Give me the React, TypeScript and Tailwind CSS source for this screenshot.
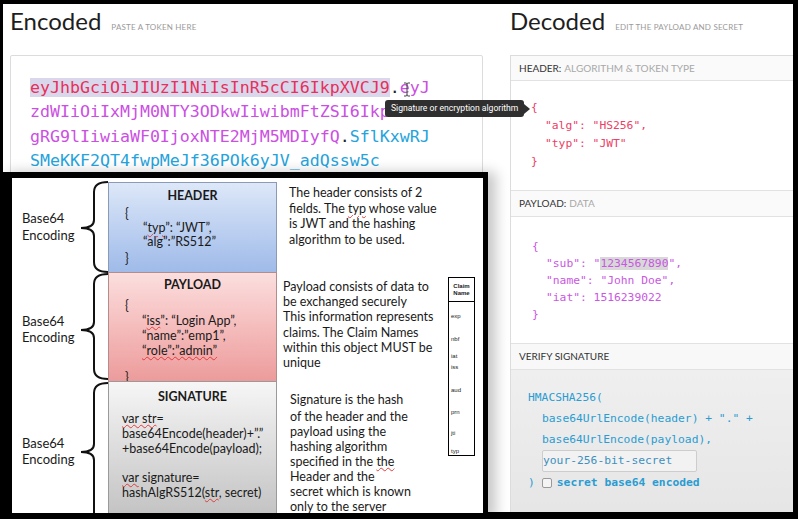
import React from "react";

const MONO = "font-['DejaVu_Sans_Mono','Liberation_Mono',monospace]";
const SANS = "font-['Lato','Liberation_Sans',sans-serif]";
const CAL = "font-['Lato','Liberation_Sans',sans-serif]";
const SPELL = "underline decoration-wavy decoration-[#e33b3b] decoration-1 underline-offset-[1px]";

function bracePath(y0: number, ym: number, y1: number) {
  return `M96 ${y0} C88 ${y0} 82 ${y0 + 3} 82 ${y0 + 10} L82 ${ym - 8} C82 ${ym - 3} 78 ${ym} 69 ${ym} C78 ${ym} 82 ${ym + 3} 82 ${ym + 8} L82 ${y1 - 10} C82 ${y1 - 3} 88 ${y1} 96 ${y1}`;
}

function Diagram() {
  return (
    <div className="absolute left-0 top-[172px] w-[488px] h-[347px] bg-black pt-[6px] pl-[12px] pr-[5px] pb-[6px] shadow-[8px_0_12px_rgba(0,0,0,0.22)]">
      <div className={`relative w-full h-full bg-white overflow-hidden ${CAL} text-[#1a1a1a]`}>
        <svg className="absolute left-0 top-0" width="471" height="335" viewBox="0 0 471 335">
          <path d={bracePath(4, 50, 94)} fill="none" stroke="#111" strokeWidth="2" />
          <path d={bracePath(96, 152, 201)} fill="none" stroke="#111" strokeWidth="2" />
          <path d={bracePath(205, 274, 345)} fill="none" stroke="#111" strokeWidth="2" />
        </svg>
        <div className="relative flex flex-col">
          {/* HEADER row */}
          <div className="flex h-[94px]">
            <div className="w-[96px] pl-[10px] pt-[32px] text-[13px] leading-[17px]">
              <div>Base64</div>
              <div>Encoding</div>
            </div>
            <div className="w-[169px] mt-[4px] border border-b-0 border-[#8c9bb5] bg-gradient-to-b from-[#dde7f8] to-[#9fbbe9] text-[12.5px]">
              <div className="mt-[5px] text-center font-bold leading-[16px]">HEADER</div>
              <div className="mt-[3px] pl-[16px] leading-[14px]">{"{"}</div>
              <div className="pl-[34px] leading-[14px]">
                “<span className={SPELL}>typ</span>”: “JWT”,
              </div>
              <div className="pl-[34px] leading-[14px]">“alg”:”RS512”</div>
              <div className="mt-[3px] pl-[16px] leading-[14px]">{"}"}</div>
            </div>
            <div className="flex-1 pl-[12px] pt-[7px] text-[12.5px] leading-[15.5px]">
              <div>The header consists of 2</div>
              <div>
                fields. The <span className={SPELL}>typ</span> whose value
              </div>
              <div>is JWT and the hashing</div>
              <div>algorithm to be used.</div>
            </div>
          </div>
          {/* PAYLOAD row */}
          <div className="flex h-[109px]">
            <div className="w-[96px] pl-[10px] pt-[41px] text-[13px] leading-[16px]">
              <div>Base64</div>
              <div>Encoding</div>
            </div>
            <div className="w-[169px] border border-b-0 border-[#b58c8c] bg-gradient-to-b from-[#fbdede] to-[#ec9b9b] text-[12.5px]">
              <div className="mt-[4px] text-center font-bold leading-[16px]">PAYLOAD</div>
              <div className="mt-[5px] pl-[16px] leading-[15px]">{"{"}</div>
              <div className="pl-[33px] leading-[15px]">
                “<span className={SPELL}>iss</span>”: “Login App”,
              </div>
              <div className="pl-[33px] leading-[15px]">“name”:”emp1”,</div>
              <div className="pl-[33px] leading-[15px]">
                <span className={SPELL}>“role”:”admin”</span>
              </div>
              <div className="mt-[13px] pl-[16px] leading-[14px]">{"}"}</div>
            </div>
            <div className="flex-1 pl-[6px] pt-[7px] text-[12.5px] leading-[15.2px]">
              <div>Payload consists of data to</div>
              <div>be exchanged securely</div>
              <div>This information represents</div>
              <div>claims. The Claim Names</div>
              <div>within this object MUST be</div>
              <div>unique</div>
            </div>
          </div>
          {/* SIGNATURE row */}
          <div className="flex h-[132px]">
            <div className="w-[96px] pl-[10px] pt-[54px] text-[13px] leading-[16px]">
              <div>Base64</div>
              <div>Encoding</div>
            </div>
            <div className="w-[169px] border border-b-0 border-[#9a9a9a] bg-gradient-to-b from-[#f6f6f6] to-[#c4c4c4] text-[12.5px]">
              <div className="mt-[7px] text-center font-bold leading-[16px]">SIGNATURE</div>
              <div className="mt-[6px] pl-[13px] leading-[15px]">
                <span className={SPELL}>var str</span>=
              </div>
              <div className="pl-[13px] leading-[15px]">base64Encode(header)+”.”</div>
              <div className="pl-[13px] leading-[15px]">+base64Encode(payload);</div>
              <div className="h-[14px]" />
              <div className="pl-[13px] leading-[15px]">
                <span className={SPELL}>var</span> signature=
              </div>
              <div className="pl-[13px] leading-[15px]">
                hashAlgRS512(<span className={SPELL}>str</span>, secret)
              </div>
            </div>
            <div className="flex-1 pl-[13px] pt-[11px] text-[12.5px] leading-[15px]">
              <div className="mb-[2px]">Signature is the hash</div>
              <div>of the header and the</div>
              <div>payload using the</div>
              <div>hashing algorithm</div>
              <div>
                specified in the <span className={SPELL}>the</span>
              </div>
              <div>Header and the</div>
              <div>secret which is known</div>
              <div>only to the server</div>
            </div>
          </div>
        </div>
        {/* Claim table */}
        <div className="absolute left-[436px] top-[99px] w-[27px] h-[179px] border-x-[1.5px] border-t-[1.5px] border-b border-black flex flex-col text-[6px] leading-[8px] font-['Liberation_Sans',sans-serif]">
          <div className="h-[24px] border-b-[1.5px] border-black flex flex-col items-center justify-center font-bold leading-[7px]">
            <div>Claim</div>
            <div>Name</div>
          </div>
          <div className="pl-[2px] mt-[10px]">exp</div>
          <div className="pl-[2px] mt-[15px]">nbf</div>
          <div className="pl-[2px] mt-[9px]">iat</div>
          <div className="pl-[2px] mt-[3px]">iss</div>
          <div className="pl-[2px] mt-[15px]">aud</div>
          <div className="pl-[2px] mt-[14px]">prn</div>
          <div className="pl-[2px] mt-[13px]">jti</div>
          <div className="pl-[2px] mt-[10px]">typ</div>
        </div>
      </div>
    </div>
  );
}

export default function App() {
  return (
    <div className="relative w-[798px] h-[519px] overflow-hidden bg-black pt-[4px] pl-[3px] pr-[5px] pb-[7px]">
      <div className="flex w-full h-full gap-[27px] bg-white">
        {/* Encoded */}
        <div className="w-[480px] pl-[7px] flex flex-col">
          <div className={`h-[51px] pt-[4px] flex items-baseline ${SANS}`}>
            <span className="text-[24px] leading-[26px] text-[#1e1e1e]">Encoded</span>
            <span className="ml-[10px] text-[8px] tracking-[0.2px] text-[#9a9a9a]">PASTE A TOKEN HERE</span>
          </div>
          <div className={`flex-1 border border-[#dcdcdc] rounded-[2px] pt-[20px] pl-[19px] ${MONO} text-[16.6px] leading-[24.3px]`}>
            <div>
              <span className="bg-[#d9d7ec] text-[#e7305a]">eyJhbGciOiJIUzI1NiIsInR5cCI6IkpXVCJ9</span>
              <span className="text-[#222]">.</span>
              <span className="text-[#cb4fe2]">eyJ</span>
            </div>
            <div className="text-[#cb4fe2]">zdWIiOiIxMjM0NTY3ODkwIiwibmFtZSI6IkpvaG4</div>
            <div>
              <span className="text-[#cb4fe2]">gRG9lIiwiaWF0IjoxNTE2MjM5MDIyfQ</span>
              <span className="text-[#222]">.</span>
              <span className="text-[#25a3dc]">SflKxwRJ</span>
            </div>
            <div className="text-[#25a3dc]">SMeKKF2QT4fwpMeJf36POk6yJV_adQssw5c</div>
          </div>
        </div>
        {/* Decoded */}
        <div className="w-[283px] flex flex-col">
          <div className={`h-[51px] pt-[4px] flex items-baseline ${SANS}`}>
            <span className="text-[24px] leading-[26px] text-[#1e1e1e]">Decoded</span>
            <span className="ml-[10px] text-[8px] tracking-[0.2px] text-[#9a9a9a]">EDIT THE PAYLOAD AND SECRET</span>
          </div>
          <div className="flex-1 flex flex-col border border-r-0 border-b-0 border-[#dcdcdc]">
            <div className={`h-[25px] border-b border-[#e2e2e2] pl-[8px] flex items-center text-[10px] ${SANS} bg-[#fafafa]`}>
              <span className="text-[#333]">HEADER:</span>
              <span className="ml-[3px] text-[#a8a8a8]">ALGORITHM &amp; TOKEN TYPE</span>
            </div>
            <div className={`h-[110px] border-b border-[#e2e2e2] pt-[18px] pl-[20px] ${MONO} text-[11.3px] leading-[18px] text-[#ec4066]`}>
              <div>{"{"}</div>
              <div className="pl-[14px]">"alg": "HS256",</div>
              <div className="pl-[14px]">"typ": "JWT"</div>
              <div>{"}"}</div>
            </div>
            <div className={`h-[26px] border-b border-[#e2e2e2] pl-[8px] flex items-center text-[10px] ${SANS} bg-[#fafafa]`}>
              <span className="text-[#333]">PAYLOAD:</span>
              <span className="ml-[3px] text-[#a8a8a8]">DATA</span>
            </div>
            <div className={`h-[127px] border-b border-[#e2e2e2] pt-[21px] pl-[21px] ${MONO} text-[11.3px] leading-[17px] text-[#c957e2]`}>
              <div>{"{"}</div>
              <div className="pl-[14px]">
                "sub": "<span className="bg-[#d8d8d8]">1234567890</span>",
              </div>
              <div className="pl-[14px]">"name": "John Doe",</div>
              <div className="pl-[14px]">"iat": 1516239022</div>
              <div>{"}"}</div>
            </div>
            <div className={`h-[26px] border-b border-[#e2e2e2] pl-[8px] flex items-center text-[10px] ${SANS} bg-[#f8f8f8] text-[#333]`}>
              VERIFY SIGNATURE
            </div>
            <div className={`flex-1 bg-gradient-to-b from-[#efefef] to-[#e6e6e6] pt-[17px] pl-[17px] ${MONO} text-[11.3px] leading-[21px] text-[#2a9cd2]`}>
              <div>HMACSHA256(</div>
              <div className="pl-[14px]">base64UrlEncode(header) + "." +</div>
              <div className="pl-[14px]">base64UrlEncode(payload),</div>
              <div className="ml-[14px] w-[155px] h-[22px] border border-[#cdcdcd] rounded-[2px] bg-[#f2f2f2] flex items-center text-[#3f8fbd] leading-[20px]">
                your-256-bit-secret
              </div>
              <div className="flex items-center">
                <span>)</span>
                <span className="ml-[7px] w-[10px] h-[10px] border border-[#9a9a9a] rounded-[2px] bg-[#f4f4f4]" />
                <span className="ml-[5px] font-bold">secret base64 encoded</span>
              </div>
            </div>
          </div>
        </div>
      </div>

      {/* text cursor */}
      <svg className="absolute left-[403px] top-[82px]" width="8" height="15" viewBox="0 0 8 15">
        <path d="M1 1 H3 Q4 1 4 2.5 V12.5 Q4 14 3 14 H1 M7 1 H5 Q4 1 4 2.5 M4 12.5 Q4 14 5 14 H7" fill="none" stroke="#444" strokeWidth="1" />
      </svg>

      {/* tooltip */}
      <div className="absolute left-[385px] top-[100px] flex items-center">
        <div className="h-[17px] px-[6px] rounded-[3px] bg-[#2f2f2f] text-white text-[8.6px] flex items-center font-['Roboto','Liberation_Sans',sans-serif]">
          Signature or encryption algorithm
        </div>
        <div className="w-0 h-0 border-y-[5px] border-y-transparent border-l-[6px] border-l-[#2f2f2f]" />
      </div>

      <Diagram />
    </div>
  );
}
